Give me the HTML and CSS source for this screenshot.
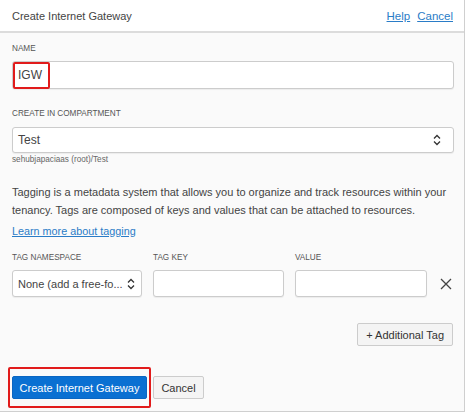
FILE: index.html
```html
<!DOCTYPE html>
<html>
<head>
<meta charset="utf-8">
<link rel="stylesheet" href="styles.css">
</head>
<body>
<div class="panel">
  <div class="header">
    <div class="title">Create Internet Gateway</div>
    <div class="links"><a href="#">Help</a><a href="#">Cancel</a></div>
  </div>
  <div class="content">
    <div class="label">NAME</div>
    <div class="field">
      <div class="input name-input">IGW</div>
      <div class="highlight hl-name"></div>
    </div>

    <div class="label lbl-comp">CREATE IN COMPARTMENT</div>
    <div class="input select comp-select">
      <span>Test</span>
      <svg class="arrows" width="8" height="12" viewBox="0 0 8 12"><path d="M1 4.5 L4 1.5 L7 4.5 M1 7.5 L4 10.5 L7 7.5" fill="none" stroke="#333" stroke-width="1.3"/></svg>
    </div>
    <div class="helper">sehubjapaciaas (root)/Test</div>

    <p class="desc">Tagging is a metadata system that allows you to organize and track resources within your tenancy. Tags are composed of keys and values that can be attached to resources.</p>
    <a class="learn" href="#">Learn more about tagging</a>

    <div class="tags">
      <div class="label">TAG NAMESPACE</div>
      <div class="label">TAG KEY</div>
      <div class="label">VALUE</div>
      <div></div>
      <div class="input select ns-select">
        <span>None (add a free-fo...</span>
        <svg class="arrows" width="8" height="12" viewBox="0 0 8 12"><path d="M1 4.5 L4 1.5 L7 4.5 M1 7.5 L4 10.5 L7 7.5" fill="none" stroke="#333" stroke-width="1.3"/></svg>
      </div>
      <div class="input tag-input"></div>
      <div class="input tag-input"></div>
      <div class="close">
        <svg width="12" height="12" viewBox="0 0 12 12"><path d="M1 1 L11 11 M11 1 L1 11" stroke="#444" stroke-width="1.3" fill="none"/></svg>
      </div>
    </div>

    <div class="add-row"><button class="btn">+ Additional Tag</button></div>

    <div class="footer">
      <div class="primary-wrap">
        <button class="btn primary">Create Internet Gateway</button>
        <div class="highlight hl-btn"></div>
      </div>
      <button class="btn">Cancel</button>
    </div>
  </div>
</div>
</body>
</html>
```

FILE: styles.css
```css
* { box-sizing: border-box; }
html, body {
  margin: 0;
  padding: 0;
  background: #ffffff;
  font-family: "Liberation Sans", Arial, sans-serif;
  color: #333;
}
.panel {
  width: 465px;
  height: 412px;
  background: #fafafa;
  border-right: 1px solid #cfcfcf;
  border-bottom: 1px solid #cfcfcf;
  display: flex;
  flex-direction: column;
}
.header {
  height: 33px;
  background: #ffffff;
  border-bottom: 2px solid #dcdcdc;
  display: flex;
  align-items: center;
  justify-content: space-between;
  padding: 0 11px 0 12px;
}
.title {
  font-size: 11px;
  color: #444;
}
.links {
  display: flex;
  gap: 7px;
}
.links a {
  font-size: 11.5px;
  color: #2a7cc7;
  text-decoration: underline;
}
.content {
  padding: 10px 10px 0 12px;
}
.label {
  font-size: 8.2px;
  line-height: 12px;
  color: #555;
}
.field {
  position: relative;
  margin-top: 6px;
}
.input {
  background: #ffffff;
  border: 1px solid #cccccc;
  border-radius: 3px;
  box-shadow: 0 1px 1px rgba(0,0,0,0.06);
}
.name-input {
  height: 28px;
  font-size: 12px;
  line-height: 26px;
  padding-left: 5px;
  color: #444;
}
.highlight {
  position: absolute;
  border: 2px solid #e11b1b;
  border-radius: 2px;
}
.hl-name {
  left: 1px;
  top: 1px;
  width: 37px;
  height: 27px;
}
.lbl-comp {
  margin-top: 19px;
}
.select {
  display: flex;
  align-items: center;
  justify-content: space-between;
}
.comp-select {
  margin-top: 7px;
  height: 26px;
  font-size: 12px;
  padding: 0 12px 0 5px;
  color: #444;
}
.helper {
  margin-top: 2px;
  font-size: 8.2px;
  line-height: 10px;
  color: #666;
}
.desc {
  margin: 18px 0 0 0;
  font-size: 11px;
  line-height: 18px;
  color: #444;
}
.learn {
  display: block;
  margin-top: 4px;
  font-size: 10.8px;
  line-height: 16px;
  color: #2a7cc7;
  text-decoration: underline;
}
.tags {
  margin-top: 13px;
  display: grid;
  grid-template-columns: 130px 131px 132px 1fr;
  column-gap: 11px;
  row-gap: 6px;
  align-items: center;
}
.tags .input {
  height: 27px;
}
.ns-select {
  font-size: 11px;
  padding: 0 6px 0 5px;
  color: #444;
  white-space: nowrap;
}
.close {
  display: flex;
  justify-content: flex-end;
  padding-right: 2px;
}
.close svg { display: block; }
.add-row {
  margin-top: 26px;
  display: flex;
  justify-content: flex-end;
  padding-right: 1px;
}
.btn {
  font-family: "Liberation Sans", Arial, sans-serif;
  height: 23px;
  font-size: 11px;
  color: #333;
  background: #f4f4f4;
  border: 1px solid #cccccc;
  border-radius: 2px;
  padding: 0 8px;
  margin: 0;
  white-space: nowrap;
}
.footer {
  margin-top: 30px;
  display: flex;
  gap: 6px;
  align-items: center;
}
.primary-wrap {
  position: relative;
}
.primary {
  display: block;
  width: 135px;
  padding: 0;
  background: #0a70d2;
  border-color: #0a66c2;
  color: #ffffff;
}
.hl-btn {
  left: -4px;
  right: -4px;
  top: -9px;
  bottom: -9px;
}
.footer > .btn:last-child {
  width: 51px;
  padding: 0;
}
```
